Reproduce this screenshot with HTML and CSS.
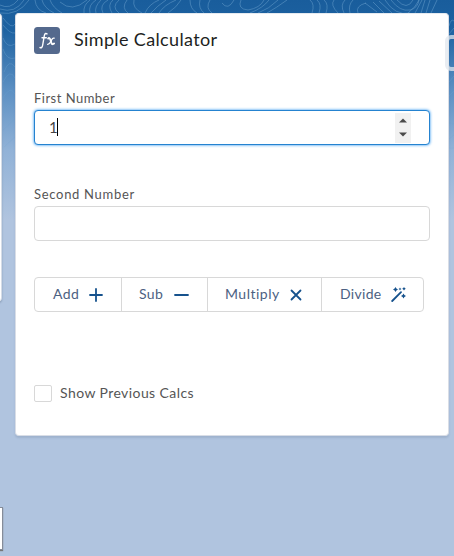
FILE: index.html
```
<!DOCTYPE html>
<html lang="en">
<head>
<meta charset="utf-8">
<title>Simple Calculator</title>
<link rel="stylesheet" href="styles.css">
</head>
<body>
<svg class="contours" width="454" height="220" viewBox="0 0 454 220" aria-hidden="true">
  <defs>
    <linearGradient id="fade" x1="0" y1="0" x2="0" y2="1"><stop offset="0" stop-color="#fff"/><stop offset="1" stop-color="#000"/></linearGradient>
    <mask id="m"><rect width="454" height="220" fill="url(#fade)"/></mask>
  </defs>
  <g fill="none" stroke="#6da3d0" stroke-opacity=".5" mask="url(#m)">
    <path d="M0 5Q10 10 18 0M0 9Q15 14 24 0M0 13Q18 16 29 0M35 0Q36 10 46 13M42 0Q44 8 54 13M50 0Q53 8 62 13M60 2Q72 13 87 0M84 13Q83 5 90 0M90 13Q88 5 96 0M96 13Q94 7 101 0M103 13Q99 5 108 0M112 13Q107 5 113 0M119 13Q111 7 119 0M127 0Q121 8 128 13M134 0Q132 8 142 13M145 13Q149 4 159 0M151 13Q157 6 166 0M159 13Q164 5 176 0M168 13Q177 7 181 0M190 0Q190 9 197 13M200 0Q198 8 204 13M210 0Q205 8 212 13M222 3q6 8 12-3M241 0q-4 9 7 10q12-2 16-10M250 13q13-5 19-13M258 13q11-4 20-13M267 13q9-5 20-13M310 0q5 4 2 13M317 0q5 4 2 13M324 0q5 4 2 13M334 0q-4 5 4 13M345 0q-5 5-1 13M353 0q-5 5-3 13M358 13q-3-7 8-10M365 3l12 9M373 2l11 11M379 1l13 12M385 0q10 16 25 13M391 0q9 12 19 10q8-2 9-10M397 0q10 11 16 0M408 13q8-6 11-13M415 13l7-13M421 13l4-13M426 13l4-13M431 13l6-13"/>
    <path d="M3 18Q12 30 15 24M3 25Q10 34 15 33M3 38Q7 49 15 44M3 49Q7 61 15 58M4 72Q9 58 15 67M3 82Q10 68 15 78M3 98Q10 85 15 94M4 113Q8 99 15 110M3 130L15 119M4 147L15 137M449 26Q451 18 454 21M449 34l5-6M449 82l5-6M449 96l5-5M449 123l5 1M449 139l5-4M449 148h5"/>
  </g>
</svg>
<div class="side side-top"></div>
<div class="side side-bottom"></div>
<main class="card">
  <header class="head">
    <svg class="fx" width="26" height="27" viewBox="0 0 26 27" aria-hidden="true">
      <rect width="26" height="27" rx="3.5" fill="#54698d"/>
      <g fill="none" stroke="#fff" stroke-linecap="round">
        <path d="M13 6.9C11 5.5 10.4 8 10 10.3L8.7 18Q8.1 21.5 6 20.5M8 10.7h4.3" stroke-width="1.4"/>
        <path d="M14.1 11.6Q15.4 10.2 16.3 12.5L17.5 16.1Q18.2 18 20.1 16.6" stroke-width="1.9"/>
        <path d="M20.1 11.2Q18.7 10.5 17.2 13.8T13.7 17.4" stroke-width="1.3"/>
      </g>
    </svg>
    <h1>Simple Calculator</h1>
  </header>
  <div class="field">
    <span class="label first">First Number</span>
    <div class="input focused"><span class="value">1</span><i class="caret"></i>
      <svg class="spinner" width="16" height="30" viewBox="0 0 16 30" aria-hidden="true"><path fill="#f1f1f1" d="M0 0h16v30H0z"/><path fill="#4a4a4a" d="M4 9.5l4-4 4 4zM4 19.5h8l-4 4z"/></svg>
    </div>
  </div>
  <div class="field second-field">
    <span class="label second">Second Number</span>
    <div class="input"></div>
  </div>
  <div class="buttons">
    <div class="button add"><span>Add</span><svg width="14" height="14" viewBox="0 0 14 14"><path d="M1 7h12M7 1v12"/></svg></div>
    <div class="button sub"><span>Sub</span><svg width="15" height="14" viewBox="0 0 15 14"><path d="M1 7h13"/></svg></div>
    <div class="button multiply"><span>Multiply</span><svg width="12" height="14" viewBox="0 0 12 14"><path d="M1.5 2.5l9 9m0-9l-9 9"/></svg></div>
    <div class="button divide"><span>Divide</span><svg class="wand" width="15" height="15" viewBox="0 0 15 15"><path d="M1.2 14l8.8-8.8"/><path class="fill" d="M4.5 0l.9 1.6 1.6.9-1.6.9-.9 1.6-.9-1.6L2 2.5l1.6-.9zM12.5 6.5l.9 1.6 1.6.9-1.6.9-.9 1.6-.9-1.6L10 9l1.6-.9zM13 0l.7 1.1 1.1.7-1.1.7-.7 1.1-.7-1.1-1.1-.7 1.1-.7zM9 .5l.5 1 1 .5-1 .5-.5 1-.5-1-1-.5 1-.5z"/></svg></div>
  </div>
  <div class="check"><i class="box"></i><span>Show Previous Calcs</span></div>
</main>
<div class="edge-control"></div>
</body>
</html>
```
FILE: styles.css
```
* { box-sizing: border-box; }
body {
  margin: 0;
  height: 556px;
  padding: 13px 5px 0 15px;
  overflow: hidden;
  position: relative;
  font-family: Lato, "Open Sans", sans-serif;
  color: #555;
  background: linear-gradient(#195d9c 0, #1d62a1 30px, #5c90c3 90px, #91b2d7 150px, #b0c4df 220px, #b0c4df 100%);
}
.contours { position: absolute; left: 0; top: 0; }
.card {
  position: relative;
  width: 434px;
  height: 423px;
  padding: 13px 19px 0;
  background: #fff;
  border: 1px solid #d8dde6;
  border-top-color: #e5eaf0;
  border-radius: 4px;
  box-shadow: 0 2px 2px rgba(70, 90, 120, .16);
}
.head { display: flex; height: 27px; align-items: center; margin-left: -1px; }
h1 { margin: 0 0 0 14px; font-size: 18px; line-height: 25px; padding-bottom: 2px; font-weight: 400; color: #1d1f22; white-space: nowrap; letter-spacing: .36px; }
.field { margin: 35px -1px 0; }
.label { display: block; height: 21px; font-size: 13px; line-height: 18px; letter-spacing: .48px; white-space: nowrap; }
.second { letter-spacing: .7px; }
.input {
  display: flex;
  align-items: center;
  width: 396px;
  height: 35px;
  padding: 0 18px 0 14px;
  border: 1px solid #d8d8d8;
  border-radius: 4px;
  background: #fff;
}
.focused { border-color: #2583d0; box-shadow: 0 0 3px #1589ee; }
.value { width: 8px; padding-bottom: 2px; font-size: 15px; color: #444; }
.caret { width: 1px; height: 18px; margin-bottom: 1px; background: #000; }
.spinner { margin-left: auto; }
.second-field { margin-top: 40px; }
.buttons { display: flex; width: 390px; height: 35px; margin: 36px 0 0 -1px; border: 1px solid #d8d8d8; border-radius: 4px; color: #4c6182; }
.button { display: flex; align-items: center; justify-content: space-between; font-size: 14px; letter-spacing: .4px; border-right: 1px solid #d8d8d8; }
.button span { padding-bottom: 2px; white-space: nowrap; }
.button svg { fill: none; stroke: #16528d; stroke-width: 1.8; stroke-linecap: round; }
.button .fill { fill: #16528d; stroke: none; }
.add { width: 87px; padding: 0 18px 0 18px; }
.sub { width: 86px; padding: 0 18px 0 17px; }
.multiply { width: 114px; padding: 0 19px 0 17px; }
.divide { flex: 1; padding: 0 17px 0 18px; border: 0; }
.divide span { letter-spacing: .3px; }
.multiply span { letter-spacing: .5px; }
.wand { stroke-linecap: butt; }
.check { display: flex; align-items: center; height: 18px; margin: 72px 0 0 -1px; font-size: 14px; letter-spacing: .42px; white-space: nowrap; }
.check span { padding-bottom: 1px; }
.box { width: 18px; height: 17px; margin-right: 8px; border: 1px solid #d8d8d8; border-radius: 2px; }
.side { position: absolute; left: -10px; background: #fff; border: 1px solid #d5dce6; }
.side-top { top: 13px; width: 12px; height: 289px; border-radius: 4px; box-shadow: 0 1px 2px #879bb6; }
.side-bottom { top: 507px; width: 13px; height: 43px; border-color: #858c99; box-shadow: 0 1px 1px #777; }
.edge-control { position: absolute; left: 445px; top: 35px; width: 16px; height: 36px; border: 4px solid rgba(225, 231, 238, .75); border-radius: 6px; }
```
